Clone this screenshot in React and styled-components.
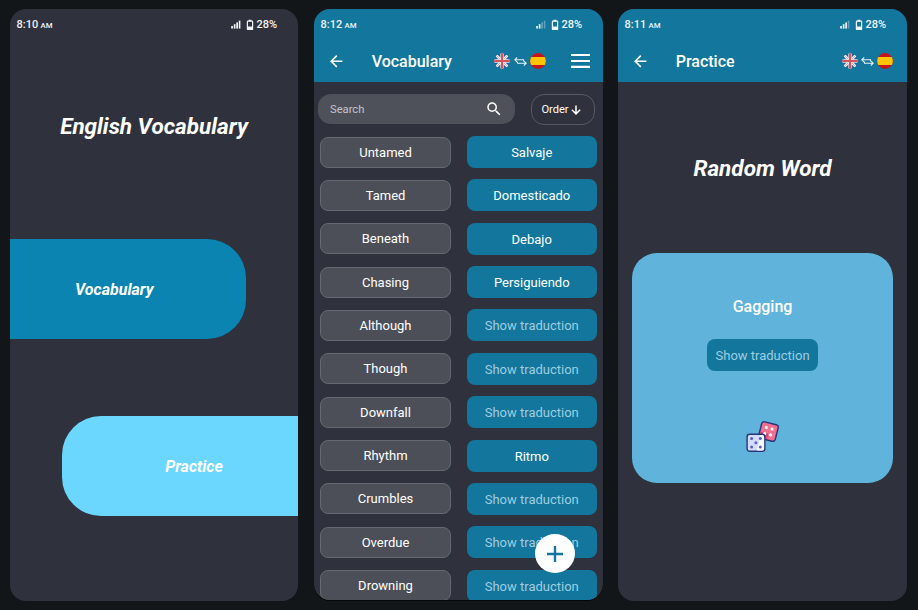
import React from "react";
import styled, { createGlobalStyle } from "styled-components";

const GlobalStyle = createGlobalStyle`
  *, *::before, *::after { box-sizing: border-box; }
  body {
    margin: 0;
    background: #131619;
    font-family: Roboto, "Open Sans", sans-serif;
    overflow: hidden;
  }
  button, input { font-family: inherit; border: 0; padding: 0; margin: 0; }
  svg { display: block; flex: none; }
`;

const Stage = styled.main`
  display: grid;
  grid-template-columns: repeat(3, 289px);
  column-gap: 15px;
  height: 610px;
  padding: 9px 0 0 10px;
`;

const Phone = styled.section`
  position: relative;
  display: flex;
  flex-direction: column;
  width: ${(p) => (p.$narrow ? 288 : 289)}px;
  height: ${(p) => (p.$short ? 591 : 592)}px;
  border-radius: 16px;
  background: #2f323c;
  box-shadow: ${(p) => (p.$short ? "0 1px 0 #050607" : "none")};
  color: #fff;
  overflow: hidden;
`;

const Status = styled.div`
  display: flex;
  align-items: center;
  justify-content: space-between;
  height: 31px;
  padding: 0 21px 0 6.5px;
  font-size: 11px;
  font-weight: 500;
  line-height: 13px;
  color: #f0f3f5;
`;

const Clock = styled.div`
  display: flex;
  align-items: baseline;
  gap: 2.4px;
`;

const Meridiem = styled.span`
  font-size: 7.8px;
`;

const Indicators = styled.div`
  display: flex;
  align-items: center;
`;

const BatteryLevel = styled.span`
  margin-left: 2.6px;
`;

const BatterySlot = styled.span`
  margin-left: 5px;
`;

const Header = styled.header`
  height: 73.3px;
  background: #12769d;
`;

const Bar = styled.div`
  display: flex;
  align-items: center;
  height: 42px;
  padding: 0 ${(p) => (p.$menu ? 13.2 : 13.8)}px 0 12.8px;
`;

const IconButton = styled.button`
  display: flex;
  background: none;
  color: #fff;
`;

const BarTitle = styled.h2`
  flex: 1;
  margin: 0 0 0 26.4px;
  font-size: 16px;
  font-weight: 500;
  line-height: 20px;
  padding-top: 1px;
`;

const Languages = styled.div`
  display: flex;
  align-items: center;
  gap: 3.2px;
`;

const MenuSlot = styled.div`
  margin-left: 25px;
`;

const Headline = styled.h1`
  margin: ${(p) => p.$top}px 0 0;
  height: 28px;
  font-size: 22.5px;
  font-style: italic;
  font-weight: 700;
  line-height: 28px;
  text-align: center;
`;

const HomeLinks = styled.nav`
  display: flex;
  flex-direction: column;
  gap: 76.6px;
  margin-top: 99px;
`;

const HomeLink = styled.button`
  width: 236px;
  height: 100px;
  align-self: ${(p) => (p.$side === "left" ? "flex-start" : "flex-end")};
  border-radius: ${(p) => (p.$side === "left" ? "0 39px 39px 0" : "39px 0 0 39px")};
  padding: ${(p) => (p.$side === "left" ? "0 27.5px 0 0" : "2px 0 0 28px")};
  background: ${(p) => (p.$side === "left" ? "#0b84b1" : "#6bd7ff")};
  color: #fff;
  font-size: 16px;
  font-style: italic;
  font-weight: 700;
`;

const Tools = styled.div`
  display: flex;
  justify-content: space-between;
  padding: 11.5px 8px 0 4px;
`;

const SearchBox = styled.div`
  display: flex;
  align-items: center;
  justify-content: space-between;
  width: 197px;
  height: 30.5px;
  padding: 0 12px;
  border-radius: 13px;
  background: #4e5159;
  color: #c3c5c9;
  font-size: 11.2px;
`;

const SearchHint = styled.span`
  padding-top: 1.4px;
`;

const OrderButton = styled.button`
  display: flex;
  align-items: center;
  justify-content: center;
  gap: 1.5px;
  width: 64.5px;
  height: 31px;
  padding: 1px 2px 0 0;
  border: 1px solid #575a63;
  border-radius: 13px;
  background: transparent;
  color: #fff;
  font-size: 11.1px;
`;

const WordList = styled.ul`
  display: flex;
  flex-direction: column;
  gap: 11.35px;
  margin: 11.6px 0 0;
  padding: 0 6px;
  list-style: none;
`;

const WordRow = styled.li`
  display: grid;
  grid-template-columns: 131px 130.5px;
  justify-content: space-between;
  align-items: center;
  flex: none;
  height: 32px;
`;

const Word = styled.div`
  height: 31px;
  border: 1px solid #666971;
  border-radius: 8px;
  background: #4c4f57;
  font-size: 13px;
  line-height: 30px;
  text-align: center;
`;

const Translation = styled.button`
  width: ${(p) => (p.$compact ? "111px" : "auto")};
  height: 32px;
  padding-top: 1px;
  border-radius: 8px;
  background: #12769d;
  color: ${(p) => (p.$hidden ? "#9fcde0" : "#fff")};
  font-size: 13px;
  line-height: 31px;
`;

const AddButton = styled.button`
  position: absolute;
  left: 220.5px;
  top: 525px;
  display: flex;
  align-items: center;
  justify-content: center;
  width: 40px;
  height: 39px;
  padding-top: 1px;
  border-radius: 50%;
  background: #fff;
  color: #12769d;
`;

const Card = styled.article`
  display: flex;
  flex-direction: column;
  align-items: center;
  width: 260.5px;
  height: 229.6px;
  margin: 70.7px 0 0 14.3px;
  padding-top: 43px;
  border-radius: 25px;
  background: #60b3da;
`;

const CardWord = styled.h3`
  height: 20px;
  margin: 0 0 23px;
  font-size: 16px;
  font-weight: 500;
  line-height: 21px;
`;

const DiceButton = styled.button`
  display: flex;
  margin-top: 50px;
  background: none;
`;

const Signal = ({ strength }) => (
  <svg width="10" height="9" viewBox="0 0 10 9" fill="currentColor">
    <rect x="0.2" y="6" width="1.7" height="2.6" />
    <rect x="2.8" y="4.2" width="1.7" height="4.4" />
    <rect x="5.3" y="2.4" width="1.7" height="6.2" opacity={strength > 2 ? 1 : 0.35} />
    <rect x="7.8" y="0.6" width="1.6" height="8" opacity={strength > 3 ? 1 : 0.35} />
  </svg>
);

const Battery = () => (
  <svg width="8" height="12" viewBox="0 0 8 12">
    <path d="M2.6.7h2.8v1.5H2.6z" fill="currentColor" />
    <rect x="1.4" y="2.1" width="5.2" height="8.4" rx="0.6" fill="none" stroke="currentColor" strokeWidth="1.2" />
    <path d="M1.3 7.4h5.4v3.2H1.3z" fill="currentColor" />
  </svg>
);

const BackIcon = () => (
  <svg width="18.5" height="18.5" viewBox="0 0 24 24" fill="currentColor">
    <path d="M20 11H7.83l5.59-5.59L12 4l-8 8 8 8 1.41-1.41L7.83 13H20v-2z" />
  </svg>
);

const SearchIcon = () => (
  <svg width="18" height="18" viewBox="0 0 24 24" fill="#fff">
    <path d="M15.5 14h-.79l-.28-.27A6.471 6.471 0 0 0 16 9.5 6.5 6.5 0 1 0 9.5 16c1.61 0 3.09-.59 4.23-1.57l.27.28v.79l5 4.99L20.49 19l-4.99-5zm-6 0C7.01 14 5 11.99 5 9.5S7.01 5 9.5 5 14 7.01 14 9.5 11.99 14 9.5 14z" />
  </svg>
);

const DownIcon = () => (
  <svg width="12" height="12" viewBox="0 0 12 12" fill="none" stroke="currentColor" strokeWidth="1.5">
    <path d="M6 1.6v8.2M1.9 5.8 6 9.9l4.1-4.1" />
  </svg>
);

const MenuIcon = () => (
  <svg width="19" height="14" viewBox="0 0 19 14" fill="currentColor">
    <path d="M0 0h19v2.1H0zM0 5.9h19V8H0zM0 11.8h19v2.1H0z" />
  </svg>
);

const SwapIcon = () => (
  <svg width="13" height="9" viewBox="0 0 13 9" fill="none" stroke="#e8f3f7" strokeWidth="1.05">
    <path d="M3.2.4.8 2.8l2.4 2.4M.9 2.8h8.6v1.4M9.8 3.8l2.4 2.4-2.4 2.4M12.1 6.2H3.5V4.8" />
  </svg>
);

const UkFlag = () => (
  <svg width="16" height="16" viewBox="0 0 16 16">
    <clipPath id="ukRound"><circle cx="8" cy="8" r="7.8" /></clipPath>
    <g clipPath="url(#ukRound)">
      <path d="M0 0h16v16H0z" fill="#1d659f" />
      <path d="m1 1 14 14M15 1 1 15" stroke="#e8eef3" strokeWidth="2.6" />
      <path d="m1 1 14 14M15 1 1 15" stroke="#d98a90" strokeWidth="0.7" />
      <path d="M8 0v16M0 8h16" stroke="#e6dfe4" strokeWidth="3.4" />
      <path d="M8 0v16M0 8h16" stroke="#d9535a" strokeWidth="2" />
    </g>
  </svg>
);

const SpainFlag = () => (
  <svg width="16" height="16" viewBox="0 0 16 16">
    <clipPath id="esRound"><circle cx="8" cy="8" r="7.9" /></clipPath>
    <g clipPath="url(#esRound)">
      <path d="M0 0h16v16H0z" fill="#c8131b" />
      <path d="M0 4h16v8H0z" fill="#ffc400" />
    </g>
  </svg>
);

const PlusIcon = () => (
  <svg width="16" height="16" viewBox="0 0 16 16" fill="none" stroke="currentColor" strokeWidth="2.4">
    <path d="M8 0v16M0 8h16" />
  </svg>
);

const DiceIcon = () => (
  <svg width="34" height="32" viewBox="0 0 34 32">
    <g transform="rotate(14 22.4 10.4)">
      <rect x="14" y="2" width="17" height="17" rx="2.6" fill="#f2708f" stroke="#283478" strokeWidth="1.4" />
      <path d="M14.8 12.5h8v5.8h-6.4a1.6 1.6 0 0 1-1.6-1.6z" fill="#cf4878" />
      <g fill="#fff">
        <circle cx="19.4" cy="7.2" r="1.55" />
        <circle cx="25.4" cy="7.2" r="1.55" />
        <circle cx="19.4" cy="13.3" r="1.55" />
        <circle cx="25.4" cy="13.3" r="1.55" />
      </g>
    </g>
    <rect x="1.1" y="13.3" width="17.7" height="17" rx="2.6" fill="#d3ddfb" stroke="#283478" strokeWidth="1.4" />
    <path d="M18.1 15.9v11.7a2 2 0 0 1-2 2h-5.2L14.7 14h1.5a2 2 0 0 1 1.9 1.9z" fill="#f6f8ff" />
    <g fill="#5a5cc9">
      <circle cx="5.6" cy="17.5" r="1.5" />
      <circle cx="14.3" cy="17.5" r="1.5" />
      <circle cx="9.9" cy="21.8" r="1.5" />
      <circle cx="5.6" cy="26.1" r="1.5" />
      <circle cx="14.3" cy="26.1" r="1.5" />
    </g>
  </svg>
);

const StatusBar = ({ time, strength }) => (
  <Status>
    <Clock>
      {time}
      <Meridiem>AM</Meridiem>
    </Clock>
    <Indicators>
      <Signal strength={strength} />
      <BatterySlot><Battery /></BatterySlot>
      <BatteryLevel>28%</BatteryLevel>
    </Indicators>
  </Status>
);

const TopBar = ({ time, strength, title, menu }) => (
  <Header>
    <StatusBar time={time} strength={strength} />
    <Bar $menu={menu}>
      <IconButton aria-label="Back"><BackIcon /></IconButton>
      <BarTitle>{title}</BarTitle>
      <Languages>
        <UkFlag />
        <SwapIcon />
        <SpainFlag />
      </Languages>
      {menu && (
        <MenuSlot>
          <IconButton aria-label="Menu"><MenuIcon /></IconButton>
        </MenuSlot>
      )}
    </Bar>
  </Header>
);

const words = [
  ["Untamed", "Salvaje"],
  ["Tamed", "Domesticado"],
  ["Beneath", "Debajo"],
  ["Chasing", "Persiguiendo"],
  ["Although"],
  ["Though"],
  ["Downfall"],
  ["Rhythm", "Ritmo"],
  ["Crumbles"],
  ["Overdue"],
  ["Drowning"],
];

export default function App() {
  return (
    <>
      <GlobalStyle />
      <Stage>
        <Phone $narrow>
          <StatusBar time="8:10" strength={4} />
          <Headline $top={72}>English Vocabulary</Headline>
          <HomeLinks>
            <HomeLink $side="left">Vocabulary</HomeLink>
            <HomeLink $side="right">Practice</HomeLink>
          </HomeLinks>
        </Phone>

        <Phone $short>
          <TopBar time="8:12" strength={2} title="Vocabulary" menu />
          <Tools>
            <SearchBox>
              <SearchHint>Search</SearchHint>
              <SearchIcon />
            </SearchBox>
            <OrderButton>
              Order
              <DownIcon />
            </OrderButton>
          </Tools>
          <WordList>
            {words.map(([word, translation]) => (
              <WordRow key={word}>
                <Word>{word}</Word>
                <Translation $hidden={!translation}>{translation || "Show traduction"}</Translation>
              </WordRow>
            ))}
          </WordList>
          <AddButton aria-label="Add word"><PlusIcon /></AddButton>
        </Phone>

        <Phone>
          <TopBar time="8:11" strength={3} title="Practice" />
          <Headline $top={72}>Random Word</Headline>
          <Card>
            <CardWord>Gagging</CardWord>
            <Translation $hidden $compact>Show traduction</Translation>
            <DiceButton aria-label="Roll"><DiceIcon /></DiceButton>
          </Card>
        </Phone>
      </Stage>
    </>
  );
}
